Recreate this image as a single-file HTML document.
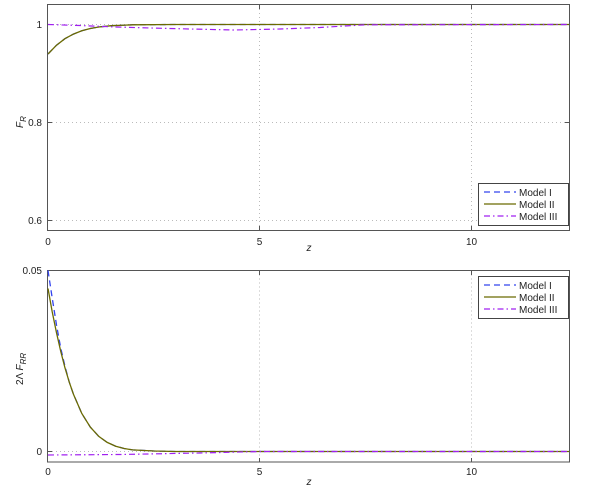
<!DOCTYPE html>
<html><head><meta charset="utf-8"><style>
html,body{margin:0;padding:0;background:#fff;}
svg{display:block;font-family:"Liberation Sans",sans-serif;}
</style></head><body>
<svg width="607" height="492" viewBox="0 0 607 492" xmlns="http://www.w3.org/2000/svg">
<g stroke="#bbb" stroke-width="1" stroke-dasharray="1,3" fill="none">
<line x1="259.5" y1="5" x2="259.5" y2="230"/><line x1="471.5" y1="5" x2="471.5" y2="230"/>
<line x1="48" y1="24.5" x2="569" y2="24.5"/><line x1="48" y1="122.5" x2="569" y2="122.5"/><line x1="48" y1="220.5" x2="569" y2="220.5"/>
<line x1="259.5" y1="270.5" x2="259.5" y2="462"/><line x1="471.5" y1="270.5" x2="471.5" y2="462"/>
<line x1="48" y1="451.5" x2="569" y2="451.5"/>
</g>
<g stroke="#555" stroke-width="1" fill="none">
<rect x="47.5" y="4.5" width="522" height="226"/>
<rect x="47.5" y="270.5" width="522" height="191.5"/>
<path d="M48 24.5h4M48 122.5h4M48 220.5h4M565 24.5h4M565 122.5h4M565 220.5h4M259.5 230v-4M471.5 230v-4M259.5 5v4M471.5 5v4"/>
<path d="M48 451.5h4M565 451.5h4M259.5 462v-4M471.5 462v-4M259.5 271v4M471.5 271v4"/>
</g>
<g font-size="10" fill="#222">
<text x="42" y="28" text-anchor="end">1</text>
<text x="42" y="126" text-anchor="end">0.8</text>
<text x="42" y="224" text-anchor="end">0.6</text>
<text x="48" y="245" text-anchor="middle">0</text>
<text x="259.5" y="245" text-anchor="middle">5</text>
<text x="471.5" y="245" text-anchor="middle">10</text>
<text x="309" y="251" text-anchor="middle" font-style="italic">z</text>
<text x="42" y="274" text-anchor="end">0.05</text>
<text x="42" y="455" text-anchor="end">0</text>
<text x="48" y="475" text-anchor="middle">0</text>
<text x="259.5" y="475" text-anchor="middle">5</text>
<text x="471.5" y="475" text-anchor="middle">10</text>
<text x="309" y="485" text-anchor="middle" font-style="italic">z</text>
<text transform="translate(23,128) rotate(-90)" font-style="italic">F<tspan font-size="8" dy="3">R</tspan></text>
<text transform="translate(23,385) rotate(-90)">2Λ <tspan font-style="italic">F</tspan><tspan font-size="8" dy="3" font-style="italic">RR</tspan></text>
</g>
<path d="M48 54L56.5 45.2L64.9 38.7L73.4 34.1L81.8 30.8L90.3 28.5L98.8 27L111.5 25.7L132.6 24.8L175 24.5L569 24.5" stroke="#3344ee" stroke-width="1.3" fill="none" stroke-dasharray="6,4"/>
<path d="M48 54L56.5 45.2L64.9 38.7L73.4 34.1L81.8 30.8L90.3 28.5L98.8 27L111.5 25.7L132.6 24.8L175 24.5L569 24.5" stroke="#6b6b00" stroke-width="1.3" fill="none"/>
<path d="M48 24.5L80 25.5L110 26.8L150 28L190 29L234 30L280 29L320 27.5L365 24.8L569 24.5" stroke="#a020f0" stroke-width="1.2" fill="none" stroke-dasharray="6,3,1.5,3"/>
<path d="M48 270.5L52.2 298L56.5 325L60.7 348L64.9 366L69.2 381.9L73.4 394.1L81.8 413.5L90.3 427.1L98.8 436.4L107.2 442.4L115.7 446.2L124.1 448.5L132.6 449.9L153.8 451L175 451.5L569 451.5" stroke="#3344ee" stroke-width="1.3" fill="none" stroke-dasharray="6,4"/>
<path d="M48 288.5L52.2 311.8L56.5 332.7L60.7 351.2L64.9 367.6L69.2 381.9L73.4 394.1L81.8 413.5L90.3 427.1L98.8 436.4L107.2 442.4L115.7 446.2L124.1 448.5L132.6 449.9L153.8 451L175 451.5L569 451.5" stroke="#6b6b00" stroke-width="1.3" fill="none"/>
<path d="M48 455L120 454.5L200 453L260 451.5L569 451.5" stroke="#a020f0" stroke-width="1.2" fill="none" stroke-dasharray="6,3,1.5,3"/>
<g>
<rect x="478.5" y="183.5" width="90" height="42" fill="#fff" stroke="#444"/>
<line x1="484" y1="192" x2="516" y2="192" stroke="#3344ee" stroke-width="1.3" stroke-dasharray="6,4"/>
<line x1="484" y1="204" x2="516" y2="204" stroke="#6b6b00" stroke-width="1.3"/>
<line x1="484" y1="216" x2="516" y2="216" stroke="#a020f0" stroke-width="1.2" stroke-dasharray="6,3,1.5,3"/>
<g font-size="10" fill="#222"><text x="519" y="196">Model I</text><text x="519" y="208">Model II</text><text x="519" y="220">Model III</text></g>
</g>
<g>
<rect x="478.5" y="276.5" width="90" height="42" fill="#fff" stroke="#444"/>
<line x1="484" y1="285" x2="516" y2="285" stroke="#3344ee" stroke-width="1.3" stroke-dasharray="6,4"/>
<line x1="484" y1="297" x2="516" y2="297" stroke="#6b6b00" stroke-width="1.3"/>
<line x1="484" y1="309" x2="516" y2="309" stroke="#a020f0" stroke-width="1.2" stroke-dasharray="6,3,1.5,3"/>
<g font-size="10" fill="#222"><text x="519" y="289">Model I</text><text x="519" y="301">Model II</text><text x="519" y="313">Model III</text></g>
</g>
</svg>
</body></html>
